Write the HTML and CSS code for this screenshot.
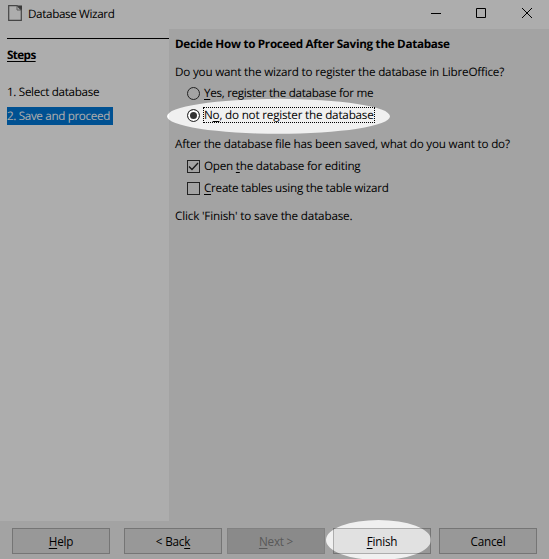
FILE: index.html
```html
<!DOCTYPE html>
<html lang="en">
<head>
<meta charset="utf-8">
<title>Database Wizard</title>
<link rel="stylesheet" href="styles.css">
</head>
<body>
<div class="window">
  <header class="titlebar">
    <svg class="doc-icon" width="14" height="16" viewBox="0 0 14 16"><path d="M.7.7H9L13.3 5v10.3H.7z" fill="#fff" stroke="#666" stroke-width="1.2"/><path d="M9 .5h5v5z" fill="#555"/><path d="M9 .7V5h4.3" fill="none" stroke="#888"/></svg>
    <h1 class="caption"><span class="t-caption">Database Wizard</span></h1>
    <svg class="controls" width="102" height="12" viewBox="0 0 102 12" fill="none" stroke="#000"><path d="M0 6.5h10M45.5 1.5h9v9h-9zM91 1l10 10M101 1L91 11"/></svg>
  </header>
  <div class="body">
    <nav class="steps">
      <h2><span class="t-steps">Steps</span></h2>
      <div class="step"><span class="t-s1">1. Select database</span></div>
      <div class="step current"><span class="t-s2">2. Save and proceed</span></div>
    </nav>
    <main class="page">
      <h2 class="row head"><span class="t-head">Decide How to Proceed After Saving the Database</span></h2>
      <p class="row question"><span class="t-q1">Do you want the wizard to register the database in LibreOffice?</span></p>
      <label class="row option yes"><span class="radio"></span><span class="t-yes"><u>Y</u>es, register the database for me</span></label>
      <label class="row option no"><span class="radio on"></span><span class="focus"><span class="t-no">N<u>o</u>, do not register the database</span></span></label>
      <p class="row question after"><span class="t-q2">After the database file has been saved, what do you want to do?</span></p>
      <label class="row option open"><span class="check"><svg width="11" height="11" viewBox="0 0 11 11"><path d="M1 5.5l3 3 6-6.5" fill="none" stroke="#222" stroke-width="1.3"/></svg></span><span class="t-open">Open <u>t</u>he database for editing</span></label>
      <label class="row option create"><span class="check"></span><span class="t-create"><u>C</u>reate tables using the table wizard</span></label>
      <p class="row question last"><span class="t-click">Click 'Finish' to save the database.</span></p>
    </main>
  </div>
  <footer class="buttons">
    <button><span class="t-help"><u>H</u>elp</span></button>
    <button class="back"><span class="t-back">&lt; Bac<u>k</u></span></button>
    <button class="next" disabled><span class="t-next"><u>N</u>ext &gt;</span></button>
    <button class="finish"><span class="t-finish"><u>F</u>inish</span></button>
    <button class="cancel"><span class="t-cancel">Cancel</span></button>
  </footer>
  <svg class="dim" width="549" height="559" viewBox="0 0 549 559"><path fill-rule="evenodd" fill="#000" fill-opacity=".32" d="M0 0H549V559H0zM167 116.3a111.5 17.5 0 0 1 223 0a111.5 17.5 0 0 1-223 0zM326 540a52.5 20 0 0 1 105 0a52.5 20 0 0 1-105 0z"/></svg>
</div>
</body>
</html>
```
FILE: styles.css
```css
* { box-sizing: border-box; }
body { margin: 0; overflow: hidden; font: 11.7px/18px "Open Sans", "Noto Sans", sans-serif; color: #000; text-rendering: geometricPrecision; }
h1, h2, p { margin: 0; font-size: inherit; }
span { white-space: nowrap; }
u { text-underline-offset: 2px; text-decoration-thickness: 1px; text-decoration-skip-ink: none; }
.window { position: relative; display: flex; flex-direction: column; width: 549px; height: 559px; background: #f0f0f0; overflow: hidden; }
.titlebar { height: 29px; display: flex; align-items: flex-start; background: #fff; padding: 5px 16px 0 8px; }
.caption { font-weight: 400; margin-left: 6px; flex: 1; }
.controls { margin-top: 2px; }
.body { height: 492px; display: flex; }
.steps { width: 169px; background: #fff; padding: 9px 0 0 7px; }
.steps h2 { border-top: 1px solid #000; height: 45px; padding-top: 7px; }
.t-steps { text-decoration: underline; text-underline-offset: 2px; text-decoration-thickness: 1px; text-decoration-skip-ink: none; }
.step { height: 18px; width: 106px; }
.step.current { margin-top: 6px; background: #0078d7; color: #fff; }
.page { flex: 1; padding: 6px 0 0 6px; }
.row { height: 18px; display: flex; align-items: center; }
.question { margin-top: 10px; }
.option { padding-left: 12px; }
.option > :last-child { margin-left: 4px; }
.yes { margin-top: 3px; }
.no { margin-top: 4px; }
.after { margin-top: 11px; }
.open, .create { margin-top: 4px; }
.t-caption { letter-spacing: -.37px; }
.t-steps { letter-spacing: -.6px; }
.t-s1 { letter-spacing: -.33px; }
.t-s2 { letter-spacing: -.36px; }
.t-head { letter-spacing: -.3px; }
.t-q1 { letter-spacing: -.21px; }
.t-yes { letter-spacing: -.32px; }
.t-no { letter-spacing: -.21px; }
.t-q2 { letter-spacing: -.2px; }
.t-open { letter-spacing: -.23px; }
.t-create { letter-spacing: -.27px; }
.t-click { letter-spacing: -.18px; }
.radio { width: 13px; height: 13px; border: 1px solid #333; border-radius: 50%; background: #fff; flex: none; }
.yes .radio { background: #f0f0f0; }
.radio.on { box-shadow: inset 0 0 0 2px #fff; background: #333; }
.check { width: 13px; height: 13px; border: 1px solid #333; flex: none; }
.check svg { display: block; }
.option > .focus { border: 1px dotted #000; height: 16px; width: 172px; line-height: 14px; margin-left: 3px; }
.buttons { display: flex; padding: 7px 0 0 12px; }
button { font: inherit; color: #000; width: 98px; height: 26px; padding: 0 0 1px; border: 1px solid #adadad; background: #e1e1e1; letter-spacing: -.2px; }
.back { margin-left: 14px; }
.next { margin-left: 5px; color: #838383; background: #ccc; border-color: #bfbfbf; }
.finish, .cancel { margin-left: 8px; }
.dim { position: absolute; inset: 0; pointer-events: none; }
```
